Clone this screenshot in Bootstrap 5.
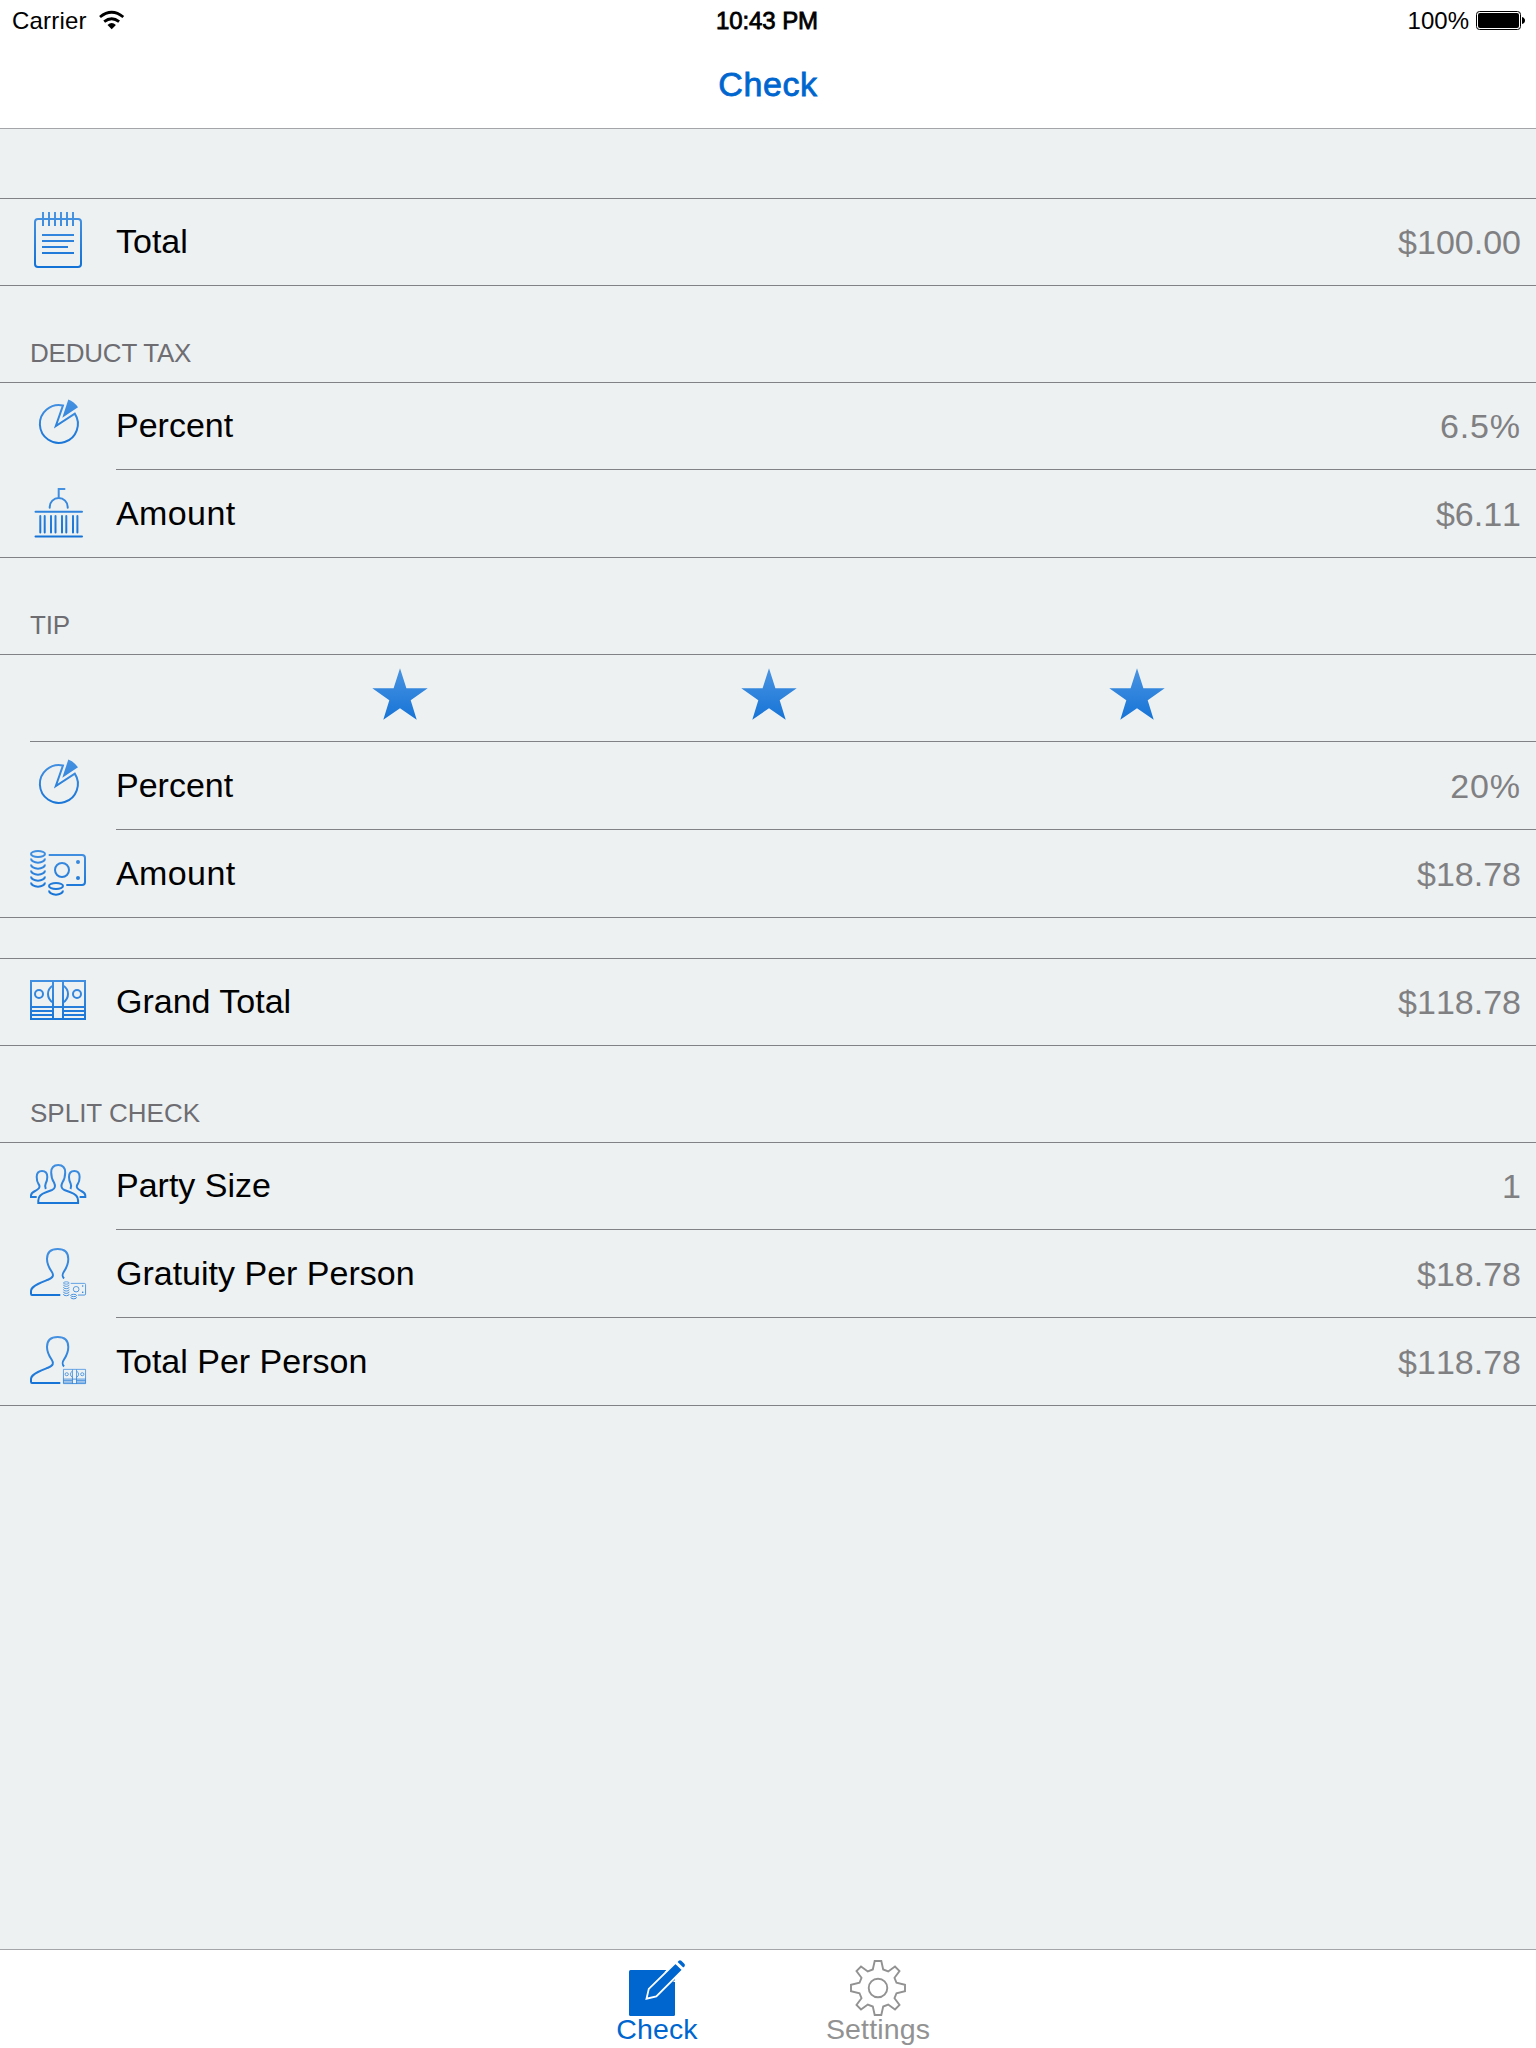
<!DOCTYPE html>
<html lang="en">
<head>
<meta charset="utf-8">
<meta name="viewport" content="width=device-width, initial-scale=1">
<title>Check</title>
<link href="https://cdn.jsdelivr.net/npm/bootstrap@5.3.0/dist/css/bootstrap.min.css" rel="stylesheet">
<style>
  body { font-family: "Liberation Sans", Arial, sans-serif; background: #edf1f2; color: #000; height: 2048px; overflow: hidden; }
  svg { display: block; flex: none; }
  .top-bar { height: 129px; border-bottom: 1px solid #a3a5a8; }
  .status-bar { height: 40px; font-size: 24px; line-height: 41px; padding: 0 11px 0 12px; }
  .status-bar > div { flex: 1 1 0; }
  .carrier { letter-spacing: .2px; }
  .wifi { margin: 10px 0 0 12px; }
  .battery { margin: 11px 0 0 7px; }
  .semi { -webkit-text-stroke: .8px currentColor; }
  .clock { letter-spacing: -.1px; padding-right: 3px; }
  .nav-title { font-size: 34px; line-height: 40px; margin-top: 24px; color: #0066cf; letter-spacing: .6px; }
  .group { border-top: 1px solid #808285; border-bottom: 1px solid #808285; }
  .group-first { margin-top: 69px; }
  .group-next { margin-top: 40px; }
  .group-head { height: 96px; padding: 0 0 14px 30px; font-size: 26px; line-height: 30px; color: #6d6d72; }
  .head-tight { letter-spacing: -.2px; }
  .cell { height: 88px; padding: 1px 0 0 28px; font-size: 34px; }
  .cell:first-child { height: 87px; padding-top: 0; }
  .cell:last-child { height: 87px; }
  .group .cell:first-child:last-child { height: 86px; }
  .cell-body { margin-left: 28px; border-bottom: 1px solid #808285; padding-right: 15px; line-height: 86px; }
  .cell:last-child .cell-body { border-bottom: 0; }
  .cell-label { position: relative; top: -1px; }
  .label-wide { letter-spacing: .4px; }
  .cell-value { color: #808082; font-kerning: none; }
  .value-pct { letter-spacing: .9px; }
  .cell-stars { padding-left: 30px; }
  .star-line { border-bottom: 1px solid #808285; padding-right: 29px; }
  .star-slot { width: 368.6px; }
  .ico { width: 60px; height: 86px; fill: none; stroke: url(#blue); stroke-width: 2; }
  .solid { fill: url(#blue); stroke: none; }
  .bottom-bar { height: 99px; border-top: 1px solid #a3a5a8; gap: 109px; padding: 10px 1px 0 0; font-size: 28.5px; }
  .tab-item { line-height: 30px; color: #929292; width: 112px; text-decoration: none; letter-spacing: .15px; }
  .tab-item.active { color: #0066cf; }
  .tab-item span { margin-top: -2px; }
</style>
<script src="https://cdn.jsdelivr.net/npm/bootstrap@5.3.0/dist/js/bootstrap.bundle.min.js"></script>
</head>
<body class="d-flex flex-column m-0">

<svg width="0" height="0" class="position-absolute">
  <defs>
    <linearGradient id="blue" gradientUnits="userSpaceOnUse" x1="0" y1="13" x2="0" y2="67">
      <stop offset="0" stop-color="#4a94e2"/><stop offset="1" stop-color="#1372d6"/>
    </linearGradient>
    <symbol id="pie" viewBox="0 0 60 86">
      <path d="M35 22.4A19 19 0 1 0 46.8 30.6L27.8 43Z"/>
      <path class="solid" d="M40.3 16.6Q46 18.7 50 24.3L34.3 34.7Z"/>
    </symbol>
    <g id="cash">
      <ellipse cx="10" cy="23" rx="7" ry="3"/>
      <path d="M3 27.5A7 4.2 0 0 0 17 27.5M3 33.5A7 4.2 0 0 0 17 33.5M3 39.5A7 4.2 0 0 0 17 39.5M3 45.5A7 4.2 0 0 0 17 45.5M3 51.5A7 4.2 0 0 0 17 51.5"/>
      <ellipse cx="28" cy="55" rx="7" ry="3"/>
      <path d="M21 59.5A7 4.2 0 0 0 35 59.5M20.7 24H54Q57 24 57 27V51Q57 54 54 54H38.3"/>
      <circle cx="34" cy="39" r="7"/>
      <g class="solid"><circle cx="50" cy="31" r="2"/><circle cx="50" cy="47" r="2"/></g>
    </g>
    <g id="bills">
      <path d="M3 22H57V60H3ZM25 22V60M35 22V60M3 48H57M3 52H25M35 52H57M3 56H25M35 56H57"/>
      <circle cx="11" cy="35" r="4"/><circle cx="49" cy="35" r="4"/>
      <path d="M25 26.5Q20 29.5 20 35T25 43.5M35 26.5Q40 29.5 40 35T35 43.5"/>
    </g>
    <path id="person" d="M32.3 64H4Q3 64 3 62.5V60C3 57 6 55 10 53C14 51 17 50 20 48.8C25.5 46.7 26 44 23.6 40.5C20.5 36 19 33 19 28C19 21.5 22.5 18 29.7 18C37 18 40.3 21.5 40.3 28C40.3 33 39 36 36 40.5C34 43.5 33.8 45 36 47.5"/>
    <path id="side" d="M8.7 54H3V52.5C3 50.5 5 49 7 48L9.5 46.5C12 45 12 42.8 10.5 41C9.2 39 8.7 36.5 8.7 34C8.7 30 10.5 28 14 28C17.5 28 19.3 30 19.3 34C19.3 36.5 18.7 38.5 17.7 40.5C16.8 42.5 16.8 44 17.8 46"/>
    <symbol id="star" viewBox="0 0 60 86">
      <path class="solid" d="M30 13.3L36.4 33.2H57.7L40.7 45.3L46.7 64.7L30 53.3L13.3 64.7L19.3 45.3L2.3 33.2H23.6Z"/>
    </symbol>
  </defs>
</svg>

<header class="top-bar bg-white flex-shrink-0">
  <div class="status-bar d-flex">
    <div class="d-flex align-items-start">
      <span class="carrier">Carrier</span>
      <svg class="wifi" width="26" height="20" viewBox="98 10 26 20" fill="none" stroke="#000" stroke-width="2.8">
        <path d="M99 17Q110.700 7.500 122.300 17M103.200 21.600Q110.700 15.800 118.100 21.600"/>
        <path d="M106.500 25Q110.700 20.900 114.900 25L110.700 29.200Z" fill="#000" stroke="none"/>
      </svg>
    </div>
    <div class="text-center semi clock">10:43 PM</div>
    <div class="d-flex justify-content-end">
      <span>100%</span>
      <svg class="battery" width="49" height="20" viewBox="1476 11 49 20">
        <rect x="1476.500" y="11.500" width="44" height="18" rx="3" fill="#fff" stroke="#000"/>
        <rect x="1478" y="13" width="41" height="15" rx="2"/>
        <path d="M1522 17Q1525 18 1525 20.500T1522 24Z"/>
      </svg>
    </div>
  </div>
  <div class="nav-title text-center semi">Check</div>
</header>

<main class="flex-grow-1">
  <section class="group group-first">
    <div class="cell d-flex">
      <svg class="ico" viewBox="0 0 60 86">
        <rect x="7" y="20" width="46" height="48" rx="3"/>
        <path d="M15 13V27M21 13V27M27 13V27M33 13V27M39 13V27M45 13V27M14 36H46M14 42H46M14 48H40M14 54H46"/>
      </svg>
      <div class="cell-body d-flex flex-grow-1 justify-content-between"><span class="cell-label">Total</span><span class="cell-value">$100.00</span></div>
    </div>
  </section>

  <div class="group-head head-tight d-flex align-items-end">DEDUCT TAX</div>
  <section class="group">
    <div class="cell d-flex">
      <svg class="ico"><use href="#pie"/></svg>
      <div class="cell-body d-flex flex-grow-1 justify-content-between"><span class="cell-label">Percent</span><span class="cell-value value-pct">6.5%</span></div>
    </div>
    <div class="cell d-flex">
      <svg class="ico" viewBox="0 0 60 86" stroke-linecap="round">
        <path d="M30.700 27V18H36.500M21.700 36.700V36A9 9 0 0 1 39.700 36V36.700M7.500 40.700H54M7.500 65.500H54M12.300 45V61.500M16.700 45V61.500M23 45V61.500M27.500 45V61.500M34 45V61.500M38.300 45V61.500M45 45V61.500M49.400 45V61.500"/>
      </svg>
      <div class="cell-body d-flex flex-grow-1 justify-content-between"><span class="cell-label label-wide">Amount</span><span class="cell-value">$6.11</span></div>
    </div>
  </section>

  <div class="group-head head-tight d-flex align-items-end">TIP</div>
  <section class="group">
    <div class="cell cell-stars d-flex">
      <div class="star-line d-flex flex-grow-1 justify-content-center">
        <div class="star-slot d-flex justify-content-center"><svg class="ico"><use href="#star"/></svg></div>
        <div class="star-slot d-flex justify-content-center"><svg class="ico"><use href="#star"/></svg></div>
        <div class="star-slot d-flex justify-content-center"><svg class="ico"><use href="#star"/></svg></div>
      </div>
    </div>
    <div class="cell d-flex">
      <svg class="ico"><use href="#pie"/></svg>
      <div class="cell-body d-flex flex-grow-1 justify-content-between"><span class="cell-label">Percent</span><span class="cell-value value-pct">20%</span></div>
    </div>
    <div class="cell d-flex">
      <svg class="ico" viewBox="0 0 60 86"><use href="#cash"/></svg>
      <div class="cell-body d-flex flex-grow-1 justify-content-between"><span class="cell-label label-wide">Amount</span><span class="cell-value">$18.78</span></div>
    </div>
  </section>

  <section class="group group-next">
    <div class="cell d-flex">
      <svg class="ico" viewBox="0 0 60 86"><use href="#bills"/></svg>
      <div class="cell-body d-flex flex-grow-1 justify-content-between"><span class="cell-label">Grand Total</span><span class="cell-value">$118.78</span></div>
    </div>
  </section>

  <div class="group-head d-flex align-items-end">SPLIT CHECK</div>
  <section class="group">
    <div class="cell d-flex">
      <svg class="ico" viewBox="0 0 60 86">
        <use href="#side"/>
        <use href="#side" transform="translate(60.300 0) scale(-1 1)"/>
        <path d="M10.300 60V57.500C10.300 54 13 51 18 49.300L24 47C27.500 45.500 27.500 42.500 26 39.500C24 36.500 23.200 33.500 23.200 29.500C23.200 24.500 26 22 30.200 22C34.400 22 37.200 24.500 37.200 29.500C37.200 33.500 36.400 36.500 34.400 39.500C32.900 42.500 32.900 45.500 36.400 47L42.400 49.300C47.400 51 50.100 54 50.100 57.500V60Z"/>
      </svg>
      <div class="cell-body d-flex flex-grow-1 justify-content-between"><span class="cell-label">Party Size</span><span class="cell-value">1</span></div>
    </div>
    <div class="cell d-flex">
      <svg class="ico" viewBox="0 0 60 86"><use href="#person"/><use href="#cash" transform="translate(34.200 43) scale(.41 .39)"/></svg>
      <div class="cell-body d-flex flex-grow-1 justify-content-between"><span class="cell-label">Gratuity Per Person</span><span class="cell-value">$18.78</span></div>
    </div>
    <div class="cell d-flex">
      <svg class="ico" viewBox="0 0 60 86"><use href="#person"/><use href="#bills" transform="translate(34.200 42.100) scale(.41 .375)"/></svg>
      <div class="cell-body d-flex flex-grow-1 justify-content-between"><span class="cell-label">Total Per Person</span><span class="cell-value">$118.78</span></div>
    </div>
  </section>
</main>

<nav class="bottom-bar bg-white d-flex justify-content-center flex-shrink-0">
  <a class="tab-item active d-flex flex-column align-items-center">
    <svg width="56" height="56" viewBox="0 0 56 56" fill="#0066cf">
      <rect y="10" width="46" height="46" rx="1.500"/>
      <path d="M35.500 12L39 8.500V12ZM44 22L48 18V22Z" fill="#fff"/>
      <path d="M17.500 38.700L19.800 28.900L46.500 2.800L53.800 9.900L27.300 36.500Z" stroke="#fff" stroke-width="1.800"/>
      <path d="M48.600 1.900L49.800.7Q51 -.3 52.300.7L55.300 3.700Q56.500 5 55.500 6.300L54.300 7.500Z"/>
    </svg>
    <span>Check</span>
  </a>
  <a class="tab-item d-flex flex-column align-items-center">
    <svg width="56" height="56" viewBox="0 0 56 56" fill="none" stroke="#929292" stroke-width="1.900">
      <path d="M24.700 1H31.300L33.200 9.500L38.200 11.500L45 6.500L49.500 11L44.500 17.800L46.500 22.800L55 24.700V31.300L46.500 33.200L44.500 38.200L49.500 45L45 49.500L38.200 44.500L33.200 46.500L31.300 55H24.700L22.800 46.500L17.800 44.500L11 49.500L6.500 45L11.500 38.200L9.500 33.200L1 31.300V24.700L9.500 22.800L11.500 17.800L6.500 11L11 6.500L17.800 11.500L22.800 9.500Z"/>
      <circle cx="28" cy="28" r="9.300"/>
    </svg>
    <span>Settings</span>
  </a>
</nav>
</body>
</html>
